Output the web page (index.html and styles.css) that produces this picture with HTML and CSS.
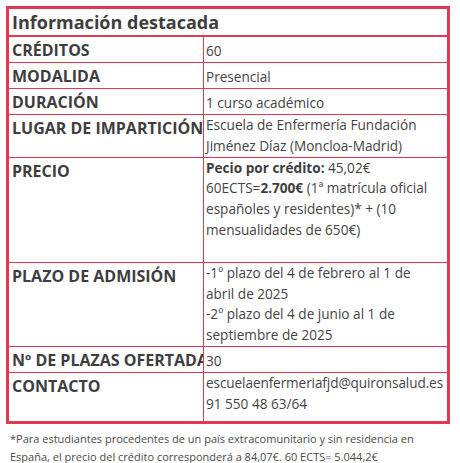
FILE: index.html
```html
<!DOCTYPE html>
<html lang="es">
<head>
<meta charset="utf-8">
<title>Información destacada</title>
<link rel="stylesheet" href="styles.css">
</head>
<body>
<table class="info">
  <colgroup><col class="col-label"><col class="col-value"></colgroup>
  <tr><th colspan="2" class="title">Información destacada</th></tr>
  <tr><td class="label"><div class="clip">CRÉDITOS</div></td><td class="value">60</td></tr>
  <tr><td class="label"><div class="clip">MODALIDA</div></td><td class="value">Presencial</td></tr>
  <tr><td class="label"><div class="clip">DURACIÓN</div></td><td class="value">1 curso académico</td></tr>
  <tr><td class="label"><div class="clip">LUGAR DE IMPARTICIÓN</div></td><td class="value">Escuela de Enfermería Fundación Jiménez Díaz (Moncloa-Madrid)</td></tr>
  <tr><td class="label"><div class="clip">PRECIO</div></td><td class="value top"><p class="para"><b>Pecio por crédito:</b> 45,02€<br>60ECTS=<b>2.700€</b> (1ª matrícula oficial españoles y residentes)* + (10 mensualidades de 650€)</p></td></tr>
  <tr><td class="label"><div class="clip">PLAZO DE ADMISIÓN</div></td><td class="value">-1º plazo del 4 de febrero al 1 de abril de 2025<br>-2º plazo del 4 de junio al 1 de septiembre de 2025</td></tr>
  <tr><td class="label"><div class="clip">Nº DE PLAZAS OFERTADAS</div></td><td class="value">30</td></tr>
  <tr class="last"><td class="label"><div class="clip">CONTACTO</div></td><td class="value"><span class="email">escuelaenfermeriafjd@quironsalud.es</span><br>91 550 48 63/64</td></tr>
</table>
<p class="note">*Para estudiantes procedentes de un país extracomunitario y sin residencia en España, el precio del crédito corresponderá a 84,07€. 60 ECTS= 5.044,2€</p>
</body>
</html>
```

FILE: styles.css
```css
html, body {
  margin: 0;
  padding: 0;
  background: #ffffff;
}

body {
  padding: 6px 0 0 6px;
  font-family: "Open Sans", "Noto Sans", sans-serif;
  color: #444444;
}

.info {
  width: 444px;
  table-layout: fixed;
  border-collapse: separate;
  border-spacing: 0;
  border: 3px solid #df3a51;
}

.col-label { width: 195px; }

.title {
  text-align: left;
  font-size: 18px;
  font-weight: 700;
  line-height: 26px;
  padding: 0 0 0 3px;
  color: #3e3e40;
  border-bottom: 2px solid #df3a51;
}

.label {
  vertical-align: top;
  padding: 1px 0 0 3px;
  border-right: 1px solid #df3a51;
  border-bottom: 1px solid #df3a51;
}

.clip {
  overflow: hidden;
  white-space: nowrap;
  font-size: 16px;
  font-weight: 700;
  line-height: 24px;
  color: #3e3e40;
}

.value {
  vertical-align: bottom;
  padding: 0 6px 0 2px;
  font-size: 13.6px;
  line-height: 20.8px;
  border-bottom: 1px solid #df3a51;
}

.value.top { vertical-align: top; }

.para {
  margin: 0 0 21px 0;
}

.para b, .value b { font-weight: 700; color: #3e3e40; }

.email { letter-spacing: -0.1px; white-space: nowrap; }

.last .label, .last .value { border-bottom: 0; }
.last .value { padding-bottom: 6px; }

.note {
  margin: 6px 0 0 4px;
  font-size: 11px;
  line-height: 18px;
  color: #4a4a4a;
  width: 442px;
}
```
